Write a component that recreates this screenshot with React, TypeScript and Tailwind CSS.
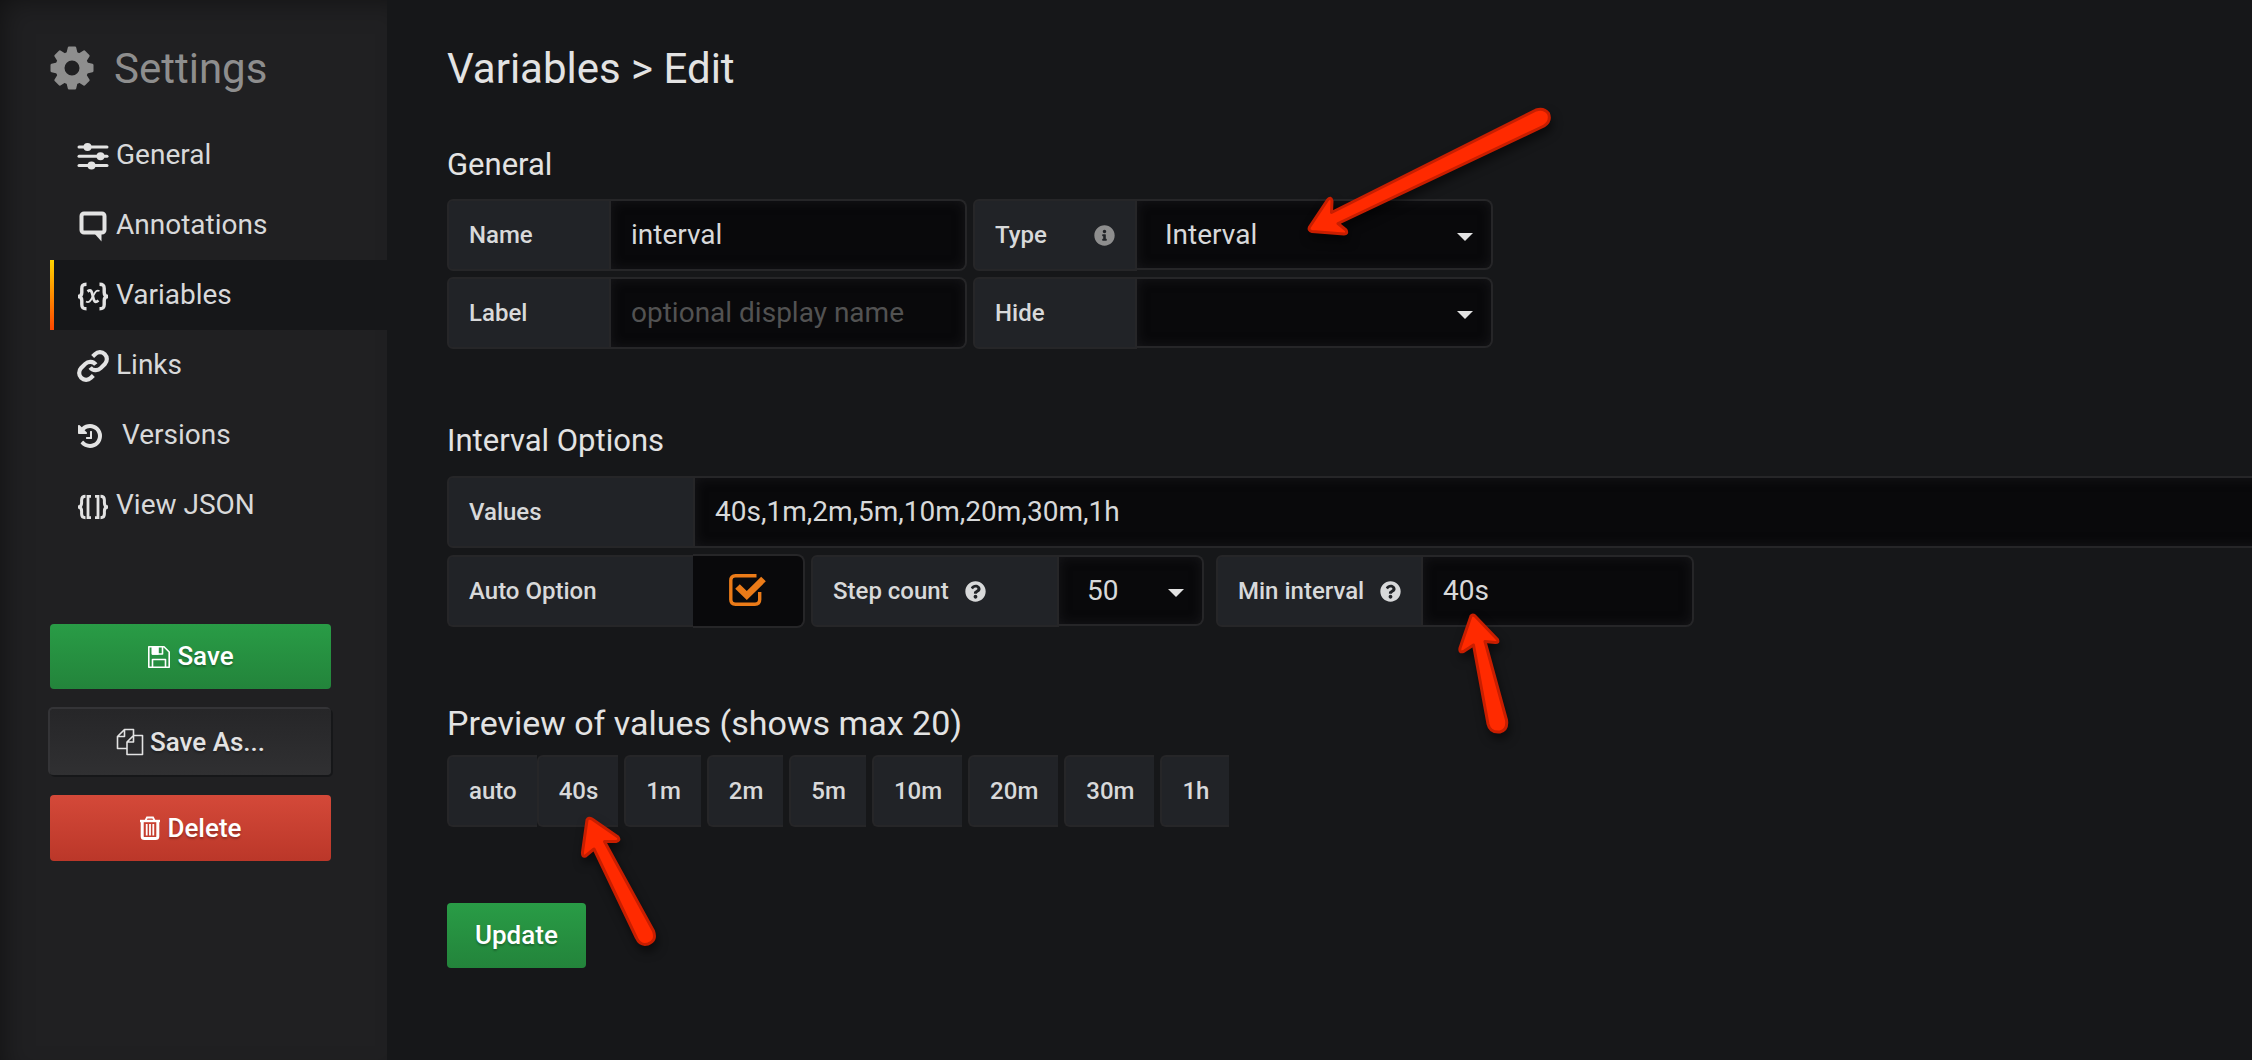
import React, { useState } from 'react';
import { FaInfoCircle, FaQuestionCircle } from 'react-icons/fa';

const SANS = "font-['Roboto','Liberation_Sans',sans-serif]";

const LABEL =
  'flex shrink-0 items-center whitespace-nowrap rounded-l-md border-2 border-[#262628] bg-[#212327] px-5 text-2xl font-medium text-[#d8d9da]';
const FIELD =
  'min-w-0 border-2 border-l-0 border-[#262628] bg-[#09090b] text-[28px] text-[#d8d9da] shadow-[inset_0_0_12px_rgba(35,35,38,0.55)] outline-none placeholder:text-[#525252]';
const HEADING = 'text-[31px] leading-10 text-[#e3e3e3]';
const GREEN = 'bg-linear-to-b from-[#299c46] to-[#23843b]';
const BUTTON =
  'flex items-center justify-center gap-1.5 rounded-sm text-[26px] font-medium text-white [text-shadow:0_2px_2px_rgba(0,0,0,0.25)]';

function GearIcon() {
  return (
    <svg viewBox="0 0 44 44" className="size-11 shrink-0" fill="currentColor" aria-hidden="true">
      <circle cx="22" cy="22" r="12" fill="none" stroke="currentColor" strokeWidth="9" />
      {[0, 45, 90, 135, 180, 225, 270, 315].map((angle) => (
        <path key={angle} d="M14.500 8.500 L16.500 7 L17.800 1.500 Q18 0.500 19 0.500 H25 Q26 0.500 26.200 1.500 L27.500 7 L29.500 8.500 L27 12 H17 Z" transform={`rotate(${angle} 22 22)`} />
      ))}
    </svg>
  );
}

function SlidersIcon() {
  return (
    <svg viewBox="0 0 32 32" className="size-8" fill="currentColor" aria-hidden="true">
      <rect x="0.5" y="5.5" width="31" height="3" rx="1.5" />
      <rect x="0.5" y="14.7" width="31" height="3" rx="1.5" />
      <rect x="0.5" y="23.9" width="31" height="3" rx="1.5" />
      <circle cx="10.5" cy="7" r="4" />
      <circle cx="23.5" cy="16.2" r="4" />
      <circle cx="14.5" cy="25.4" r="4" />
    </svg>
  );
}

function CommentIcon() {
  return (
    <svg viewBox="0 0 32 32" className="size-8" fill="none" stroke="currentColor" strokeWidth="4" aria-hidden="true">
      <rect x="4.5" y="3.5" width="23" height="19" rx="2.5" />
      <path d="M17 23 L24.5 31.500 V22 Z" fill="currentColor" stroke="none" />
    </svg>
  );
}

function VariableIcon() {
  return (
    <svg viewBox="0 0 32 32" className="size-8" fill="none" stroke="currentColor" aria-hidden="true">
      <path d="M9.5 4.300 C5.500 4.300 4.800 6 4.800 8.500 V12.500 C4.800 15 4 16.500 1 16.500 C4 16.500 4.800 18 4.800 20.500 V24.500 C4.800 27 5.500 28.700 9.500 28.700" strokeWidth="3.400" />
      <path d="M22.500 4.300 C26.500 4.300 27.200 6 27.200 8.500 V12.500 C27.200 15 28 16.500 31 16.500 C28 16.500 27.200 18 27.200 20.500 V24.500 C27.200 27 26.500 28.700 22.500 28.700" strokeWidth="3.400" />
      <path d="M10.500 11.500 C14 9 14.800 11 15.800 16 C16.800 21 17.800 23.500 21.500 20.500" strokeWidth="2.800" />
      <path d="M22.500 11 C19 9.500 17.800 13 15.800 16.500 C13.800 20.500 12 23.500 9 21.500" strokeWidth="1.800" />
    </svg>
  );
}

function LinkIcon() {
  return (
    <svg viewBox="0.5 0.5 23 23" className="size-8" fill="none" stroke="currentColor" strokeWidth="3" aria-hidden="true">
      <path d="M10 13a5 5 0 0 0 7.540.54l3-3a5 5 0 0 0-7.070-7.070l-1.720 1.710" />
      <path d="M14 11a5 5 0 0 0-7.540-.54l-3 3a5 5 0 0 0 7.070 7.070l1.710-1.710" />
    </svg>
  );
}

function HistoryIcon() {
  return (
    <svg viewBox="0 128 1536 1536" className="ml-px mr-[13px] size-6" fill="currentColor" aria-hidden="true">
      <path d="M1536 896q0 156-61 298t-164 245-245 164-298 61q-172 0-327-72.500t-264-204.500q-7-10-6.500-22.500t8.500-20.500l137-138q10-9 25-9 16 2 23 12 73 95 179 147t225 52q104 0 198.500-40.500t163.500-109.500 109.500-163.500 40.500-198.500-40.500-198.500-109.500-163.500-163.500-109.500-198.500-40.500q-98 0-188 35.500t-160 101.500l137 138q31 30 14 69-17 40-59 40h-448q-26 0-45-19t-19-45v-448q0-42 40-59 39-17 69 14l130 129q107-101 244.500-156.500t284.500-55.500q156 0 298 61t245 164 164 245 61 298zm-640-288v448q0 14-9 23t-23 9h-320q-14 0-23-9t-9-23v-64q0-14 9-23t23-9h224v-352q0-14 9-23t23-9h64q14 0 23 9t9 23z" />
    </svg>
  );
}

function JsonIcon() {
  return (
    <svg viewBox="0 0 32 32" className="size-8" fill="none" stroke="currentColor" aria-hidden="true">
      <path d="M8.500 6.300 C5.500 6.300 4.600 7.500 4.600 10 V13 C4.600 15.500 4 17 1 17 C4 17 4.600 18.500 4.600 21 V24 C4.600 26.500 5.500 27.700 8.500 27.700" strokeWidth="3" />
      <path d="M23.500 6.300 C26.500 6.300 27.400 7.500 27.400 10 V13 C27.400 15.500 28 17 31 17 C28 17 27.400 18.500 27.400 21 V24 C27.400 26.500 26.500 27.700 23.500 27.700" strokeWidth="3" />
      <path d="M14 6.300 H11 V27.700 H14 M18 6.300 H21 V27.700 H18" strokeWidth="2.800" />
    </svg>
  );
}

function SaveIcon() {
  return (
    <svg viewBox="0 0 24 24" className="size-6" fill="none" stroke="currentColor" strokeWidth="1.600" strokeLinejoin="round" aria-hidden="true">
      <path d="M1.800 1.800 H17 L22.200 7 V22.200 H1.800 Z M5.500 22 V14.500 H18.500 V22 M5.500 2 V9 H15.500 V2" />
      <path d="M5.500 2 H11 V9 H5.500 Z" fill="currentColor" />
    </svg>
  );
}

function CopyIcon() {
  return (
    <svg viewBox="0 0 28 28" className="size-7" fill="none" stroke="currentColor" strokeWidth="1.600" strokeLinejoin="round" aria-hidden="true">
      <path d="M17.500 7 V1.500 H8.500 L1.500 8.500 V20.500 H11 M8.500 1.500 V8.500 H1.500" />
      <path d="M11 14 L17.500 7.500 H26.500 V26.500 H11 Z M17.500 7.500 V14 H11" />
    </svg>
  );
}

function TrashIcon() {
  return (
    <svg viewBox="0 0 22 24" className="h-6 w-[22px]" fill="none" stroke="currentColor" aria-hidden="true">
      <path d="M1 5 H21" strokeWidth="2.400" />
      <path d="M6.500 4.500 L8 1.500 H14 L15.500 4.500" strokeWidth="1.800" />
      <path d="M3.200 5 V20.500 Q3.200 22.500 5.500 22.500 H16.500 Q18.800 22.500 18.800 20.500 V5" strokeWidth="3" />
      <path d="M7.700 8 V19.500 M11 8 V19.500 M14.300 8 V19.500" strokeWidth="1.800" />
    </svg>
  );
}

function CheckIcon() {
  return (
    <svg viewBox="0 0 38 32" className="pointer-events-none col-start-1 row-start-1 h-8 w-[38px] text-[#eb7b18]" fill="none" stroke="currentColor" aria-hidden="true">
      <path d="M27.500 1.800 H6.500 Q1.800 1.800 1.800 6.500 V25.500 Q1.800 30.200 6.500 30.200 H26 Q30.700 30.200 30.700 25.500 V18" strokeWidth="3.400" />
      <path d="M8.500 12.500 L17.800 21.500 L34.500 5" strokeWidth="6.600" />
    </svg>
  );
}

function Select({ id, value, width }: { id: string; value: string; width: string }) {
  return (
    <div className={`grid h-[71px] ${width}`}>
      <select
        id={id}
        defaultValue={value}
        className={`${FIELD} col-start-1 row-start-1 w-full appearance-none rounded-r-lg pl-7`}
      >
        <option>{value}</option>
      </select>
      <span className="pointer-events-none col-start-1 row-start-1 mr-5 mt-1 size-0 self-center justify-self-end border-x-8 border-t-8 border-x-transparent border-t-[#e3e3e3]" />
    </div>
  );
}

const NAV = [
  { label: 'General', icon: <SlidersIcon /> },
  { label: 'Annotations', icon: <CommentIcon /> },
  { label: 'Variables', icon: <VariableIcon /> },
  { label: 'Links', icon: <LinkIcon /> },
  { label: 'Versions', icon: <HistoryIcon /> },
  { label: 'View JSON', icon: <JsonIcon /> },
];

function Sidebar() {
  return (
    <aside className="w-[387px] shrink-0 bg-[#202022] pl-[50px] pt-10 shadow-[inset_12px_10px_30px_-12px_rgba(0,0,0,0.5)]">
      <h2 className="flex h-[56px] items-center gap-5 text-[42px] text-[#8e8e8e]">
        <GearIcon />
        Settings
      </h2>
      <nav className="mt-6">
        {NAV.map(({ label, icon }) => (
          <a
            key={label}
            href="#"
            className={
              label === 'Variables'
                ? 'flex h-[70px] items-center border-l-4 [border-image:linear-gradient(#ffd500,#ff4400)_1] bg-[#161719] pl-[23px] text-[28px] text-[#d8d9da]'
                : 'flex h-[70px] items-center pl-[27px] text-[28px] text-[#d8d9da]'
            }
          >
            <span className="mr-[7px] mt-0.5 flex shrink-0 text-[#e3e3e3]">{icon}</span>
            {label}
          </a>
        ))}
      </nav>
      <div className="mt-[84px] flex w-[281px] flex-col gap-5">
        <button className={`${BUTTON} ${GREEN} h-[65px]`}>
          <SaveIcon />
          Save
        </button>
        <button
          className={`${BUTTON} h-[66px] bg-linear-to-b from-[#262628] to-[#303032] text-[#e3e3e3]! shadow-[-1px_-1px_0_1px_#343437,1px_1px_0_1px_#161719]`}
        >
          <CopyIcon />
          Save As...
        </button>
        <button className={`${BUTTON} h-[66px] bg-linear-to-b from-[#d44939] to-[#bb3729]`}>
          <TrashIcon />
          Delete
        </button>
      </div>
    </aside>
  );
}

function Arrow({ d, box }: { d: string; box: string }) {
  return (
    <svg
      className={`pointer-events-none absolute z-10 overflow-visible drop-shadow-[2px_6px_5px_rgba(0,0,0,0.5)] ${box}`}
      fill="#ff2a00"
      stroke="#c81e00"
      strokeWidth="3"
      strokeLinejoin="round"
      aria-hidden="true"
    >
      <path d={d} />
    </svg>
  );
}

function Chip({ text }: { text: string }) {
  return <span className={`${LABEL} h-[72px] border-r-0`}>{text}</span>;
}

export default function App() {
  const [auto, setAuto] = useState(true);
  return (
    <div className={`flex min-h-screen overflow-hidden bg-[#161719] ${SANS}`}>
      <Sidebar />
      <main className="min-w-0 flex-1 pl-[60px] pt-[41px]">
        <h1 className="h-14 text-[42px] leading-[56px] text-[#e3e3e3]">Variables &gt; Edit</h1>

        <section className="mt-12">
          <h2 className={HEADING}>General</h2>
          <div className="mt-3.5 flex flex-wrap gap-1.5">
            <div className="flex h-[72px]">
              <label htmlFor="name" className={`${LABEL} w-[164px]`}>Name</label>
              <input id="name" defaultValue="interval" className={`${FIELD} w-[356px] rounded-r-lg px-5`} />
            </div>
            <div className="relative flex h-[72px]">
              <label htmlFor="type" className={`${LABEL} w-[164px] justify-between`}>
                Type
                <FaInfoCircle className="size-[21px] text-[#8e8e8e]" />
              </label>
              <Select id="type" value="Interval" width="w-[356px]" />
              <Arrow
                box="left-[335px] top-[-92px] h-[129px] w-[244px]"
                d="M1.500 120 L19.500 93 Q23 89 24 94 L23.500 105.500 L228 3 Q236 0.500 240.500 6.500 Q243.500 14 236 19 L30 116.500 L38 123 Q40 127 36 127 L4 124.500 Q0 123.500 1.500 120 Z"
              />
            </div>
          </div>
          <div className="mt-1.5 flex flex-wrap gap-1.5">
            <div className="flex h-[72px]">
              <label htmlFor="label" className={`${LABEL} w-[164px]`}>Label</label>
              <input id="label" placeholder="optional display name" className={`${FIELD} w-[356px] rounded-r-lg px-5`} />
            </div>
            <div className="flex h-[72px]">
              <label htmlFor="hide" className={`${LABEL} w-[164px]`}>Hide</label>
              <Select id="hide" value="" width="w-[356px]" />
            </div>
          </div>
        </section>

        <section className="mt-[72px]">
          <h2 className={HEADING}>Interval Options</h2>
          <div className="-mr-6 mt-[15px] flex h-[72px]">
            <label htmlFor="values" className={`${LABEL} w-[248px]`}>Values</label>
            <input id="values" defaultValue="40s,1m,2m,5m,10m,20m,30m,1h" className={`${FIELD} flex-1 px-5`} />
          </div>
          <div className="mt-[7px] flex flex-wrap gap-1.5">
            <div className="flex h-[72px]">
              <label htmlFor="auto" className={`${LABEL} w-[246px] border-r-0`}>Auto Option</label>
              <span className="-my-px grid h-[74px] w-[112px] place-items-center rounded-r-lg border-2 border-l-0 border-[#262628] bg-[#09090b] pb-0.5">
                <input
                  id="auto"
                  type="checkbox"
                  checked={auto}
                  onChange={(e) => setAuto(e.target.checked)}
                  className="col-start-1 row-start-1 size-9 appearance-none"
                />
                {auto && <CheckIcon />}
              </span>
            </div>
            <div className="flex h-[72px]">
              <label htmlFor="steps" className={`${LABEL} w-[248px] gap-4`}>
                Step count
                <FaQuestionCircle className="size-[21px]" />
              </label>
              <Select id="steps" value="50" width="w-[145px]" />
            </div>
            <div className="relative ml-1.5 flex h-[72px]">
              <label htmlFor="min" className={`${LABEL} w-[207px] gap-4`}>
                Min interval
                <FaQuestionCircle className="size-[21px] shrink-0" />
              </label>
              <input id="min" defaultValue="40s" className={`${FIELD} w-[271px] rounded-r-lg px-5`} />
              <Arrow
                box="left-[243px] top-[59px] h-[119px] w-[49px]"
                d="M12 2 Q13.500 0 16 2 L38.500 25.500 Q40 29 36 28.500 L26 27.500 L47.500 106 Q49 116 41 118 Q31 119 29 110 L14.500 31 L4.500 37.500 Q0 39 1 34 Z"
              />
            </div>
          </div>
        </section>

        <section className="mt-[74px]">
          <h2 className="text-[34px] leading-11 text-[#e3e3e3]">Preview of values (shows max 20)</h2>
          <div className="relative mt-2.5 flex">
            <Chip text="auto" />
            <div className="flex flex-wrap gap-1.5">
              {['40s', '1m', '2m', '5m', '10m', '20m', '30m', '1h'].map((v) => (
                <Chip key={v} text={v} />
              ))}
            </div>
            <Arrow
              box="left-[134px] top-[62px] h-[129px] w-[75px]"
              d="M6 3 Q7.500 0 11 2 L37 20 Q39.500 23.500 35 24.500 L23.500 24.500 L72.500 114 Q76 124 67 127 Q59 129 55.500 121 L13 32 L4.500 39 Q1 40 1.500 35 Z"
            />
          </div>
        </section>

        <button className={`${BUTTON} ${GREEN} mt-[76px] h-[65px] px-7`}>Update</button>
      </main>
    </div>
  );
}
